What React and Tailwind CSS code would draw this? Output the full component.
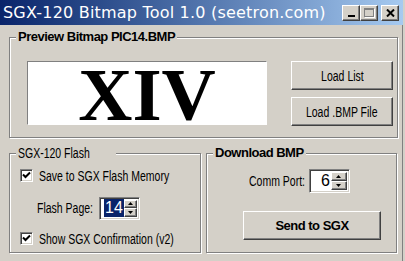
import React from 'react'

const ui = { fontFamily: '"Liberation Sans", Arial, sans-serif' }

// narrow text, the dialog font is much narrower than Arial
const Narrow = ({ children, className = 'origin-left' }) => (
  <span className={`inline-block whitespace-nowrap text-[14px] leading-[16px] scale-x-[0.75] ${className}`}>{children}</span>
)

const Raised = ({ className = '', children }) => (
  <div
    className={`bg-[#d4d0c8] border border-t-white border-l-white border-r-[#404040] border-b-[#404040] shadow-[inset_-1px_-1px_0_#808080] flex items-center justify-center ${className}`}
  >
    {children}
  </div>
)

const Check = ({ label }) => (
  <div className="flex items-center gap-[6px] h-[13px]">
    <div className="w-[13px] h-[13px] shrink-0 bg-white border border-t-[#808080] border-l-[#808080] border-r-white border-b-white shadow-[inset_1px_1px_0_#404040,inset_-1px_-1px_0_#d4d0c8] flex items-center justify-center">
      <svg width="9" height="9" viewBox="0 0 9 9">
        <path d="M1 3.5 L3.5 6 L8 1.5" stroke="#000" strokeWidth="2" fill="none" />
      </svg>
    </div>
    <Narrow>{label}</Narrow>
  </div>
)

const Spinner = ({ value, selected, className = '' }) => (
  <div
    className={`bg-white border border-t-[#808080] border-l-[#808080] border-r-white border-b-white shadow-[inset_1px_1px_0_#404040,inset_-1px_-1px_0_#d4d0c8] flex items-center p-[2px] shrink-0 ${className}`}
  >
    <div className="flex-1 flex items-center pl-[2px]">
      <span
        className={`text-[16px] leading-[18px] px-[1px] ${selected ? 'bg-[#0a246a] text-white' : 'text-black ml-[6px]'}`}
      >
        {value}
      </span>
    </div>
    <div className="flex flex-col w-[17px] h-full">
      <Raised className="flex-1">
        <svg width="5" height="3" viewBox="0 0 5 3"><path d="M2.5 0 L5 3 L0 3 Z" fill="#000" /></svg>
      </Raised>
      <Raised className="flex-1">
        <svg width="5" height="3" viewBox="0 0 5 3"><path d="M0 0 L5 0 L2.5 3 Z" fill="#000" /></svg>
      </Raised>
    </div>
  </div>
)

const Group = ({ title, isBold, className = '', children }) => (
  <div className={`relative border border-[#808080] shadow-[1px_1px_0_#fff,inset_1px_1px_0_#fff] ${className}`}>
    <span className="absolute -top-[9px] left-[6px] px-[2px] bg-[#d4d0c8] text-black leading-[16px] h-[16px] flex items-center">
      {isBold ? (
        <span className="text-[13px] font-bold tracking-[-0.5px]">{title}</span>
      ) : (
        <Narrow>{title}</Narrow>
      )}
    </span>
    {children}
  </div>
)

export default function App() {
  return (
    <div className="w-[405px] h-[261px] bg-[#d4d0c8] flex flex-col border-r-2 border-r-[#d4d0c8] shadow-[inset_-1px_0_0_#808080]" style={ui}>
      <div className="h-[25px] flex items-center justify-between bg-gradient-to-r from-[#0a246a] to-[#a6caf0] pl-[3px] pr-[4px]">
        <span className="text-white text-[16px] tracking-[0.2px]" style={{ fontFamily: '"DejaVu Sans", Verdana, sans-serif' }}>
          SGX-120 Bitmap Tool 1.0 (seetron.com)
        </span>
        <div className="flex items-center">
          <Raised className="w-[18px] h-[16px]">
            <div className="w-[7px] h-[2px] bg-black mt-[7px]" />
          </Raised>
          <Raised className="w-[18px] h-[16px]">
            <div className="w-[10px] h-[9px] border border-[#808080] border-t-2 shadow-[1px_1px_0_#fff]" />
          </Raised>
          <Raised className="w-[18px] h-[16px] ml-[3px]">
            <svg width="9" height="8" viewBox="0 0 9 8">
              <path d="M1 0.5 L8 7.5 M8 0.5 L1 7.5" stroke="#000" strokeWidth="2" />
            </svg>
          </Raised>
        </div>
      </div>

      <div className="flex flex-col pl-[9px] pr-[6px] pt-[12px] gap-[15px]">
        <Group title="Preview Bitmap PIC14.BMP" isBold className="h-[101px] w-[389px]">
          <div className="flex pt-[23px] pl-[17px] gap-[24px]">
            <div className="w-[240px] h-[64px] bg-white border border-t-[#808080] border-l-[#808080] border-r-white border-b-white flex items-start justify-center">
              <span className="text-[75px] font-bold leading-[58px] mt-[4px] text-black" style={{ fontFamily: '"Liberation Serif", "Times New Roman", serif' }}>
                XIV
              </span>
            </div>
            <div className="flex flex-col gap-[7px]">
              <Raised className="w-[102px] h-[29px]"><Narrow className="origin-center">Load List</Narrow></Raised>
              <Raised className="w-[102px] h-[29px]"><Narrow className="origin-center">Load .BMP File</Narrow></Raised>
            </div>
          </div>
        </Group>

        <div className="flex gap-[5px]">
          <Group title="SGX-120 Flash" className="w-[192px] h-[100px]">
            <div className="flex flex-col pl-[10px] pt-[15px]">
              <Check label="Save to SGX Flash Memory" />
              <div className="flex items-center pl-[17px] mt-[14px] gap-[7px]">
                <div className="w-[55px]"><Narrow>Flash Page:</Narrow></div>
                <Spinner value="14" selected className="w-[41px] h-[23px]" />
              </div>
              <div className="mt-[12px]">
                <Check label="Show SGX Confirmation (v2)" />
              </div>
            </div>
          </Group>

          <Group title="Download BMP" isBold className="w-[192px] h-[100px]">
            <div className="flex flex-col items-start pt-[15px]">
              <div className="flex items-center gap-[5px] pl-[42px]">
                <div className="w-[55px]"><Narrow>Comm Port:</Narrow></div>
                <Spinner value="6" className="w-[41px] h-[24px]" />
              </div>
              <Raised className="w-[138px] h-[29px] mt-[18px] ml-[36px]">
                <span className="text-[13px] font-bold tracking-[-0.5px]">Send to SGX</span>
              </Raised>
            </div>
          </Group>
        </div>
      </div>
    </div>
  )
}
